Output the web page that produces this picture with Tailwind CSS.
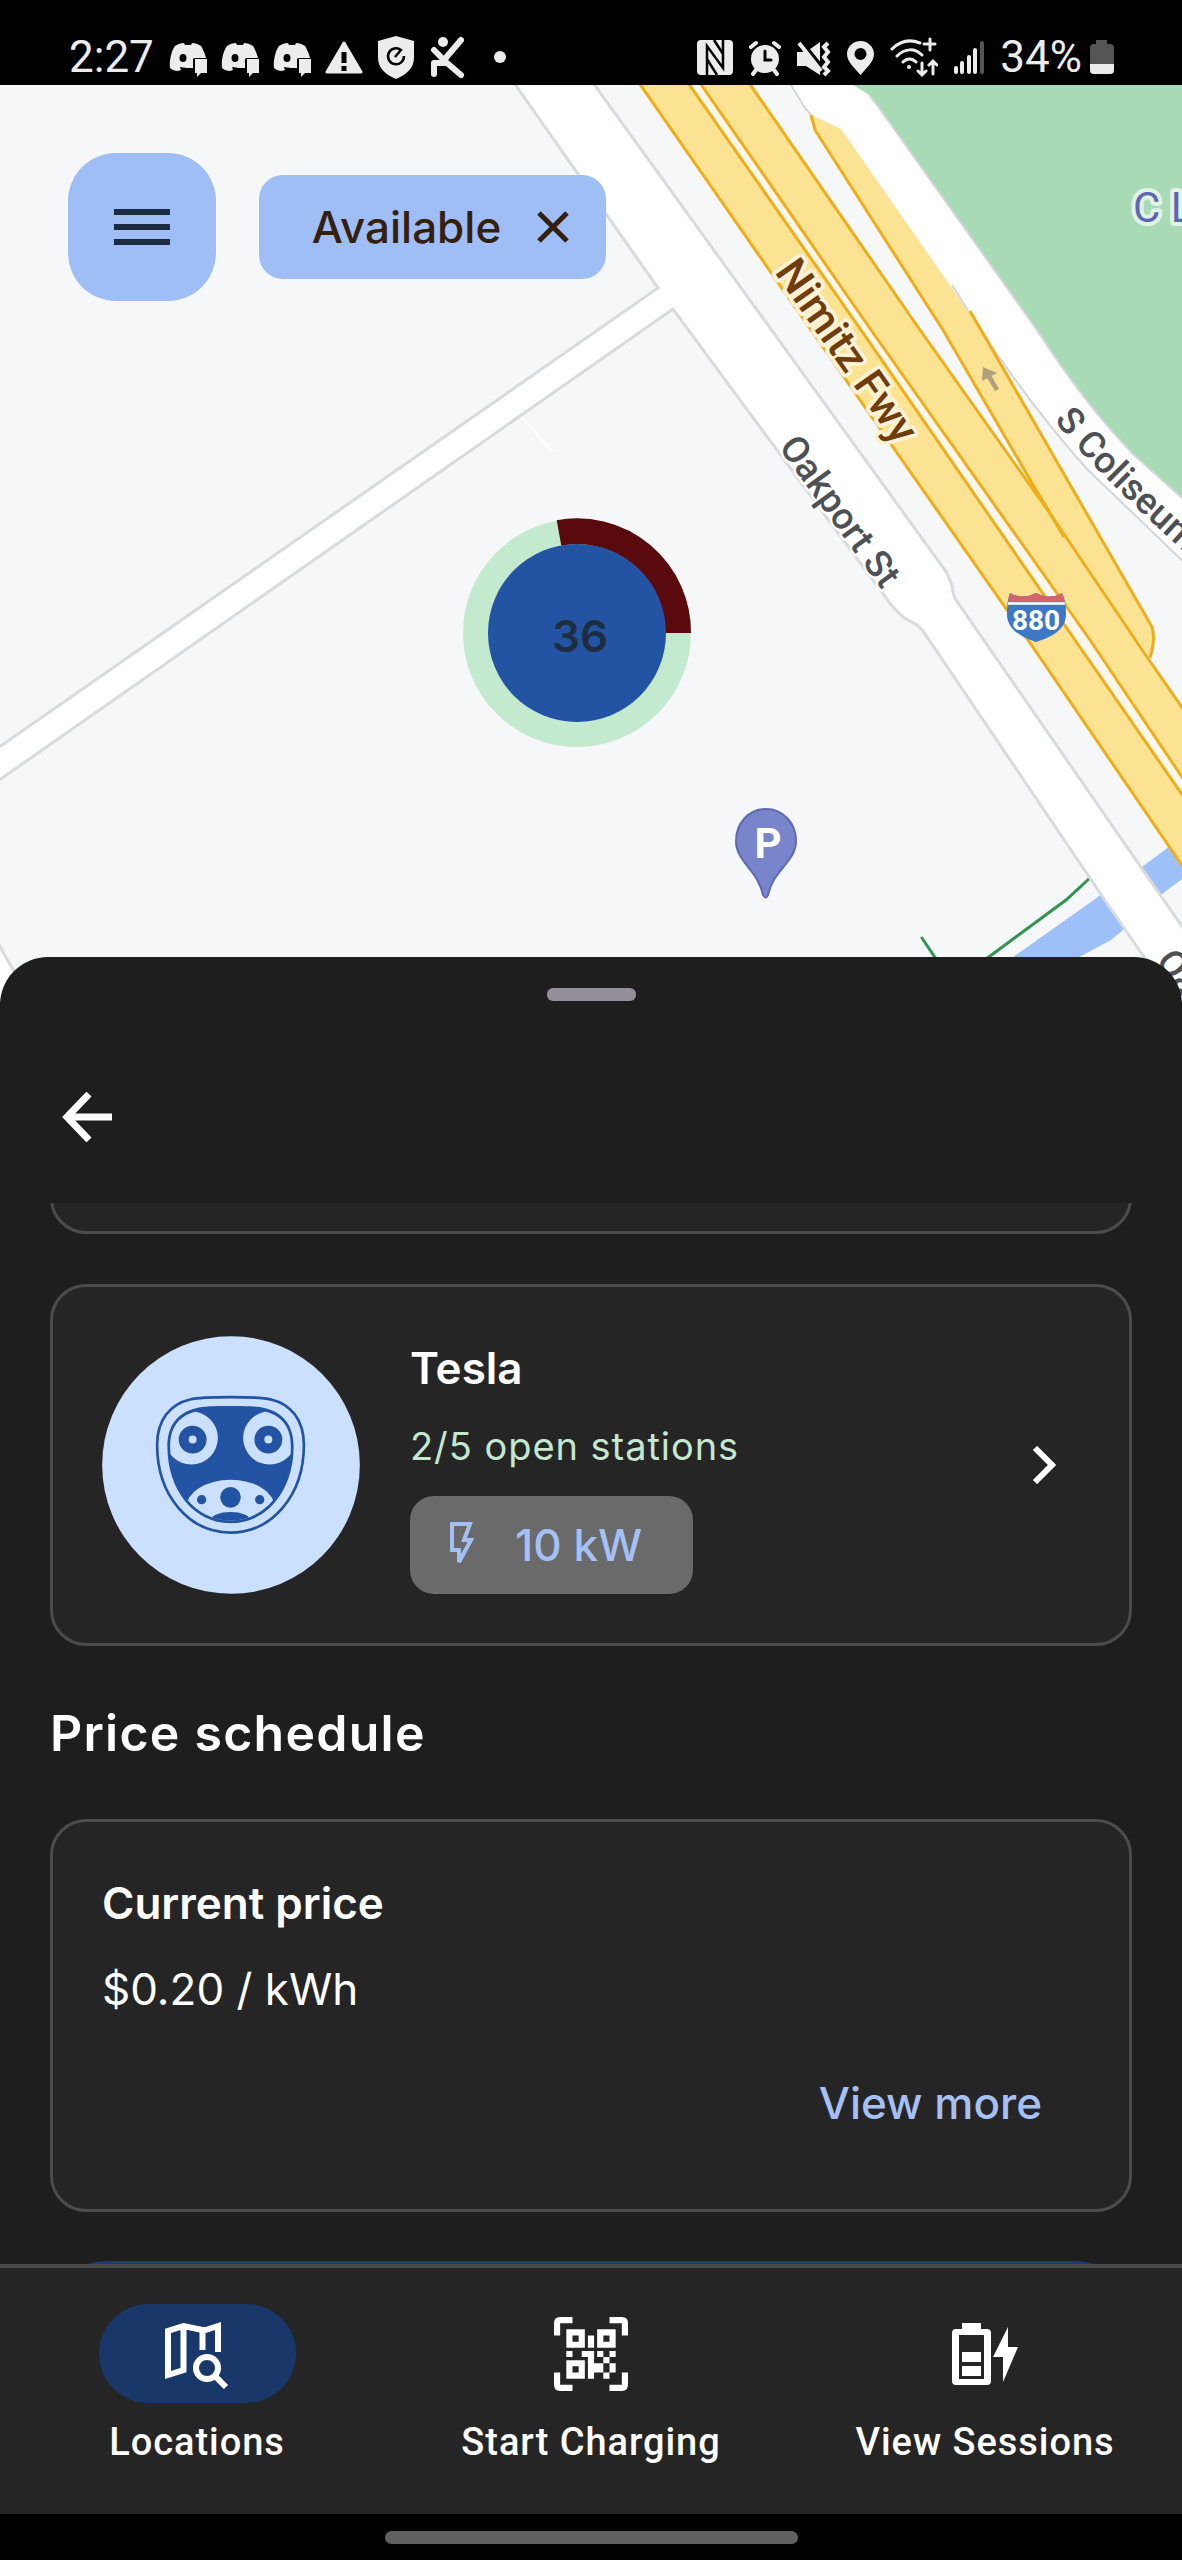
<!DOCTYPE html>
<html lang="en">
<head>
  <meta charset="UTF-8" />
  <meta name="viewport" content="width=device-width, initial-scale=1.0"/>
  <title>Charging Locations</title>
  <script src="https://cdn.jsdelivr.net/npm/@tailwindcss/browser@4"></script>
</head>
<body class="h-screen flex flex-col overflow-hidden bg-black text-white font-['Inter',sans-serif]">

<!-- Status bar -->
<header class="shrink-0 h-[85px] pt-7 pl-[69px] pr-[68px] flex items-center justify-between text-[#ececec] font-['Roboto',sans-serif] text-[44px] leading-[56px]">
  <div class="flex items-center gap-[14px]">
    <span class="w-[86px]">2:27</span>
    <svg class="w-[38px] h-11" viewBox="0 0 38 44" fill="currentColor"><path d="M1 33C0 24 3 15 6 11c3-2 6-3 9-3l1 2h6l1-2c3 0 6 1 9 3 2 3 4 8 5 12H25a4 4 0 0 0-1 4v6h-6l-7-1 1 3-3 1C6 36 3 35 1 33z"/><ellipse cx="14" cy="23" rx="3.500" ry="4" fill="#000"/><path d="M26 24h12v14H32l-4 4v-4h-2z"/></svg>
    <svg class="w-[38px] h-11" viewBox="0 0 38 44" fill="currentColor"><path d="M1 33C0 24 3 15 6 11c3-2 6-3 9-3l1 2h6l1-2c3 0 6 1 9 3 2 3 4 8 5 12H25a4 4 0 0 0-1 4v6h-6l-7-1 1 3-3 1C6 36 3 35 1 33z"/><ellipse cx="14" cy="23" rx="3.500" ry="4" fill="#000"/><path d="M26 24h12v14H32l-4 4v-4h-2z"/></svg>
    <svg class="w-[38px] h-11" viewBox="0 0 38 44" fill="currentColor"><path d="M1 33C0 24 3 15 6 11c3-2 6-3 9-3l1 2h6l1-2c3 0 6 1 9 3 2 3 4 8 5 12H25a4 4 0 0 0-1 4v6h-6l-7-1 1 3-3 1C6 36 3 35 1 33z"/><ellipse cx="14" cy="23" rx="3.500" ry="4" fill="#000"/><path d="M26 24h12v14H32l-4 4v-4h-2z"/></svg>
    <svg class="w-[38px] h-11" viewBox="0 0 38 44"><path d="M19 8L36 37H2z" fill="currentColor" stroke="currentColor" stroke-width="3" stroke-linejoin="round"/><path d="M19 17v11M19 31v5" stroke="#000" stroke-width="5"/></svg>
    <svg class="w-[38px] h-11" viewBox="0 0 38 44"><path d="M19 1l18 5v17c0 10-8 17-18 21C9 40 1 33 1 23V6z" fill="currentColor"/><path d="M27 21a8 8 0 1 1-3-6l-6 7" fill="none" stroke="#000" stroke-width="2.500"/></svg>
    <svg class="w-[38px] h-11" viewBox="0 0 38 44" fill="none" stroke="currentColor" stroke-width="6" stroke-linecap="round" stroke-linejoin="round"><circle cx="14" cy="7" r="5" fill="currentColor" stroke="none"/><path d="M5 15l10 10L32 5M5 39V28h13l14 12M20 19l-6 8"/></svg>
    <svg class="w-[38px] h-11" viewBox="0 0 38 44"><circle cx="19" cy="22" r="6" fill="currentColor"/></svg>
  </div>
  <div class="flex items-center gap-4">
    <svg class="w-9 h-11" viewBox="0 0 36 44"><rect y="5" width="36" height="35" rx="4" fill="currentColor"/><path d="M10 40V11l16 22V5M17 5l9 14M10 24l10 16" fill="none" stroke="#000" stroke-width="2.500"/></svg>
    <svg class="w-8 h-11" viewBox="0 0 32 44" fill="none" stroke="currentColor" stroke-linecap="round"><circle cx="16" cy="24" r="14" fill="currentColor" stroke="none"/><path d="M2 12l5-4M30 12l-5-4M7 35l-3 4M25 35l3 4" stroke-width="4"/><path d="M16 16v9h6" stroke="#000" stroke-width="3"/></svg>
    <svg class="w-[34px] h-11" viewBox="0 0 34 44" fill="none" stroke="currentColor"><path d="M0 17h9l14-10v33L9 31H0z" fill="currentColor" stroke="none"/><path d="M4 6l24 30" stroke="#000" stroke-width="4"/><path d="M2 8l22 28" stroke-width="4"/><path d="M31 8l-4 4 4 5-4 5 4 5-4 5 4 4-4 4" stroke-width="4"/></svg>
    <svg class="w-[27px] h-11" viewBox="0 0 27 44" fill="currentColor"><path fill-rule="evenodd" d="M13.500 6C6 6 0 12 0 19c0 8 7 13 13.500 21C20 32 27 27 27 19 27 12 21 6 13.500 6zm0 7a6 6 0 1 1 0 12 6 6 0 0 1 0-12z"/></svg>
    <svg class="w-12 h-11" viewBox="0 0 48 44" fill="none" stroke="currentColor" stroke-width="3" stroke-linecap="round"><path d="M2 14c9-9 18-10 28-6M7 21c8-8 18-8 25-1M13 27c4-4 9-4 13 0M40 4v11M34 9h11M32 28v12M28 36l4 4 4-4M43 39V26M39 30l4-4 4 4"/><circle cx="19" cy="32" r="2" fill="currentColor" stroke="none"/></svg>
    <svg class="w-[30px] h-11" viewBox="0 0 30 44" stroke="currentColor" stroke-width="4" stroke-linecap="round"><path d="M2 33v4M8 28v9M15 22v15M21 15v22"/><path d="M28 8v29" stroke="#555"/></svg>
    <span class="flex items-center gap-2">34%
      <svg class="w-6 h-11" viewBox="0 0 24 44"><path d="M6 5h11v4h3q4 0 4 4v22q0 4-4 4H4q-4 0-4-4V13q0-4 4-4h2z" fill="#555"/><path d="M0 29h24v6q0 4-4 4H4q-4 0-4-4z" fill="currentColor"/></svg>
    </span>
  </div>
</header>

<!-- Map -->
<section class="relative shrink-0 h-[917px] overflow-hidden bg-[#f5f7f9]">
  <svg class="absolute inset-0 w-full h-full font-['Roboto',sans-serif]" viewBox="0 85 1182 917" preserveAspectRatio="xMidYMin slice">
    <!-- park -->
    <path d="M845 80L869 95L877 105L1037 330Q1085 405 1134 455L1190 505V80z" fill="#a8dab5"/>
    <!-- water -->
    <path d="M1006 962L1105 892L1128 926L1111 940L1070 962zM1138 870L1170 846L1190 860V873L1158 897z" fill="#9dc0f8"/>
    <path d="M1092 876L1066 900L982 962M922 938L938 962" fill="none" stroke="#2f9550" stroke-width="3" stroke-linecap="round"/>
    <path d="M520 415L553 452" stroke="#fff" stroke-width="2"/>
    <!-- S Coliseum Way -->
    <path d="M788 80L805 108L811 115L841 129L952 285Q1020 395 1088 470L1190 568V505L1134 455Q1085 405 1037 330L877 105L869 95L845 80z" fill="#fff"/>
    <path d="M788 80L805 108L811 115M952 285Q1020 395 1088 470L1190 568M869 95L877 105L1037 330Q1085 405 1134 455L1190 505" fill="none" stroke="#d3d6d9" stroke-width="2"/>
    <!-- Oakport St and the side street -->
    <path d="M512 80L658 288L-5 750V783L673 309L892 606L903 617L917 625L923 631L1100 893L1190 1024V938L956 600L952 585L947 573L591 80z" fill="#fff"/>
    <path d="M512 80L658 288L-5 750M-5 783L673 309L892 606L903 617L917 625L923 631L1100 893L1190 1024M1190 938L956 600Q953 596 952 585L947 573L591 80" fill="none" stroke="#d8dadd" stroke-width="3"/>
    <path d="M-2 943L30 1000H-2z" fill="#fff" stroke="#d8dadd" stroke-width="3"/>
    <!-- freeway -->
    <path d="M686 80L861 330L1078 640L1190 806V789L871 330L698 80z" fill="#fdf6ea"/>
    <g fill="#fce293" stroke="#f0ad1a" stroke-width="3">
      <path d="M811 115L815 130L943 330L1039 495L1064 537L1150 658L1152 650Q1155 637 1152 627L981 330L841 129z" stroke="none"/>
      <path d="M811 115L815 130L943 330L1039 495L1064 537M970 311L981 330L1152 627Q1155 637 1152 650L1150 658" fill="none"/>
      <path d="M637 80L811 330L1028 640L1190 877V806L1075 640L861 330L686 80z"/>
      <path d="M698 80L871 330L1090 640L1190 789V719L1149 660L1049 512L920 330L747 80z"/>
      <path d="M1039 495L1064 537" fill="none"/>
    </g>
    <path d="M983 367L997 373L982 381zM986 376L990 373L999 389L995 391z" fill="#b0a07c"/>
    <!-- labels -->
    <g font-size="37" font-weight="500" fill="#4d5156" stroke="#fff" stroke-width="5" paint-order="stroke" stroke-linejoin="round">
      <text transform="translate(778 447) rotate(54)">Oakport St</text>
      <text transform="translate(1155 961) rotate(54)">Oakport St</text>
      <path id="coliseum" d="M1054 420Q1092 470 1200 566" fill="none" stroke="none"/>
      <text><textPath href="#coliseum">S Coliseum</textPath></text>
    </g>
    <text transform="translate(774 272) rotate(55)" font-size="43" font-weight="500" fill="#6f3c0c" stroke="#fdf1d3" stroke-width="8" paint-order="stroke" stroke-linejoin="round">Nimitz Fwy</text>
    <text x="1133" y="222" font-size="42" fill="#5c66b4" stroke="#e1f2e6" stroke-width="8" paint-order="stroke" stroke-linejoin="round">C L</text>
    <!-- interstate shield -->
    <path d="M1010 593Q1022 600 1036 593Q1050 600 1062 593Q1066 600 1066 614C1066 628 1055 636 1036 642C1018 636 1007 628 1007 614Q1007 600 1010 593z" fill="#3c78c6"/>
    <path d="M1010 593Q1022 600 1036 593Q1050 600 1062 593L1065 602H1008z" fill="#d5636a"/>
    <path d="M1008 603.500H1065" stroke="#fff" stroke-width="2.500"/>
    <text x="1036" y="630" text-anchor="middle" font-size="28" font-weight="700" fill="#fff">880</text>
    <!-- parking pin -->
    <path d="M766 809C749 809 736 823 736 841C736 862 758 870 763 895Q766 900 768 895C773 870 796 862 796 841C796 823 783 809 766 809z" fill="#7985cb" stroke="#5d69b6" stroke-width="2"/>
    <text x="768" y="858" text-anchor="middle" font-size="42" font-weight="700" fill="#fff">P</text>
    <!-- station cluster -->
    <circle cx="577" cy="633" r="101" fill="none" stroke="#c3eacf" stroke-width="26"/>
    <path d="M678 633A101 101 0 0 0 559 533" fill="none" stroke="#5a0a0c" stroke-width="26"/>
    <circle cx="577" cy="633" r="89" fill="#2254a3"/>
    <text x="580" y="652" text-anchor="middle" font-family="Inter, sans-serif" font-size="44" font-weight="600" fill="#1e2e40">36</text>
  </svg>

  <div class="relative flex items-start gap-[43px] pt-[68px] pl-[68px]">
    <button aria-label="Menu" class="size-[148px] rounded-[48px] bg-[#9ebef5] flex items-center justify-center">
      <svg class="w-14 h-10" viewBox="0 0 56 40" stroke="#1b2b42" stroke-width="6"><path d="M0 5h56M0 20h56M0 35h56"/></svg>
    </button>
    <button class="mt-[22px] h-[104px] w-[347px] rounded-3xl bg-[#9ebef5] text-[#35200f] text-[44px] font-medium flex items-center justify-center gap-9 pl-4">
      Available
      <svg class="size-8" viewBox="0 0 32 32" stroke="currentColor" stroke-width="5"><path d="M2 2l28 28M30 2L2 30"/></svg>
    </button>
  </div>
</section>

<!-- Bottom sheet -->
<main class="relative flex-1 min-h-0 -mt-[45px] rounded-t-[48px] bg-[#1e1e1e] flex flex-col">
  <div class="shrink-0 h-[246px] pt-[31px]">
    <div class="mx-auto w-[89px] h-[13px] rounded-md bg-[#938f99]"></div>
    <button aria-label="Back" class="block mt-[83px] ml-[54px] p-2">
      <svg class="w-[50px] h-[50px]" viewBox="0 0 50 50" fill="none" stroke="#fff" stroke-width="7"><path d="M50 25H5M27 2L5 25l22 23"/></svg>
    </button>
  </div>

  <div class="flex-1 min-h-0 overflow-hidden px-[50px]">
    <div class="-mt-[49px] h-20 rounded-[36px] border-3 border-[#4c4c4c] bg-[#252525]"></div>

    <a href="#tesla" class="mt-[50px] p-[49px] rounded-[36px] border-3 border-[#4c4c4c] bg-[#252525] flex items-center">
      <svg class="shrink-0 size-[258px]" viewBox="65 77 777 777">
        <defs><clipPath id="face"><path d="M452 296C400 296 375 297 355 302C298 315 270 350 270 410C270 536 346 633 452 633C558 633 634 536 634 410C634 350 606 315 549 302C529 297 504 296 452 296Z"/></clipPath></defs>
        <circle cx="453.500" cy="465.500" r="388" fill="#cbdffe"/>
        <path d="M452 261C400 261 360 261 330 268C270 282 231 330 231 405C231 560 330 669 452 669C574 669 673 560 673 405C673 330 634 282 574 268C544 261 504 261 452 261Z" fill="none" stroke="#2254a3" stroke-width="8"/>
        <path d="M452 288C400 288 370 289 350 294C290 308 262 350 262 410C262 540 340 641 452 641C564 641 642 540 642 410C642 350 614 308 554 294C534 289 504 288 452 288Z" fill="#2254a3"/>
        <g clip-path="url(#face)">
          <circle cx="334" cy="384" r="80" fill="#cbdffe"/>
          <circle cx="570" cy="384" r="80" fill="#cbdffe"/>
          <ellipse cx="452" cy="595" rx="134" ry="85" fill="#cbdffe"/>
          <ellipse cx="452" cy="632" rx="60" ry="25" fill="#2254a3"/>
        </g>
        <g fill="#2254a3">
          <circle cx="338" cy="389" r="42"/><circle cx="566" cy="389" r="42"/>
          <circle cx="452" cy="563" r="31"/><circle cx="365" cy="570" r="14"/><circle cx="540" cy="570" r="14"/>
        </g>
        <circle cx="338" cy="389" r="12" fill="#cbdffe"/><circle cx="566" cy="389" r="12" fill="#cbdffe"/>
      </svg>
      <div class="ml-[50px] flex-1 flex flex-col items-start">
        <h2 class="text-[44px] leading-[64px] font-semibold">Tesla</h2>
        <p class="mt-4 text-[38px] leading-[60px] text-[#c3e8cf] tracking-wide">2/5 open stations</p>
        <span class="mt-5 h-[98px] w-[283px] rounded-3xl bg-[#6a6a6a] text-[#a4c0f4] text-[44px] font-medium flex items-center pl-10 gap-[41px]">
          <svg class="w-6 h-[46px]" viewBox="0 0 24 46" fill="none" stroke="currentColor" stroke-width="4"><path d="M2 2h18l-6 16h7L9 40V28H2z"/></svg>
          10 kW
        </span>
      </div>
      <svg class="mr-6 w-6 h-[38px]" viewBox="0 0 24 38" fill="none" stroke="#fff" stroke-width="6"><path d="M3 2l17 17L3 36"/></svg>
    </a>

    <h1 class="mt-[57px] mb-14 text-[50px] leading-[60px] font-semibold tracking-wide">Price schedule</h1>

    <div class="px-[49px] pt-[49px] pb-[57px] rounded-[36px] border-3 border-[#4c4c4c] bg-[#252525] text-[44px] leading-[64px]">
      <h2 class="font-semibold">Current price</h2>
      <p class="mt-[22px]">$0.20 / kWh</p>
      <div class="mt-8 flex justify-end">
        <button class="h-[99px] px-[38px] text-[#a4c0f4] font-medium">View more</button>
      </div>
    </div>

    <button aria-label="Start" class="block w-full mt-[49px] h-28 rounded-full bg-[#1d3c70]"></button>
  </div>
</main>

<!-- Bottom navigation -->
<nav class="shrink-0 pt-9 pb-12 border-t-4 border-[#4a4a4a] bg-[#252525] grid grid-cols-3 font-['Roboto',sans-serif] text-[38px] leading-[48px] font-medium tracking-wide">
  <a href="#locations" class="flex flex-col items-center gap-[15px]">
    <span class="w-[197px] h-[99px] rounded-full bg-[#193869] flex items-center justify-center">
      <svg class="w-[66px] h-[70px]" viewBox="165 2319 66 70" fill="none" stroke="#fff" stroke-width="6"><path d="M203.500 2350V2330L184.500 2326L169 2331V2375L184.500 2370V2326M203.500 2331L219 2326V2352"/><circle cx="208" cy="2368" r="11"/><path d="M216 2376L227 2387"/></svg>
    </span>
    Locations
  </a>
  <a href="#charge" class="flex flex-col items-center gap-[15px]">
    <span class="h-[99px] flex items-center">
      <svg class="size-[74px]" viewBox="0 0 12 12" fill="#fff">
        <path d="M.5 3V1Q.5.5 1 .5H3M9 .5h2q.5 0 .5.5v2M11.500 9v2q0 .5-.5.5H9M3 11.500H1Q.5 11.500.5 11V9" fill="none" stroke="#fff"/>
        <path d="M2.500 2.500h2v2h-2zM7.500 2.500h2v2h-2zM2.500 7.500h2v2h-2z" fill="none" stroke="#fff"/>
        <path d="M5.500 3h1v2h-1zM2 5.500h1v1H2zM4.500 5.500h2v2h-1v-1h-1zM5.500 7.500H7V8h1v1H6.500v1h-1zM7 5.500h1v1H7zM9 5.500h1v1H9zM8 6.500h1v1H8zM7 7.500h1V8H7zM9 7.500h1V9H9zM8 9h1v1H8z"/>
      </svg>
    </span>
    Start Charging
  </a>
  <a href="#sessions" class="flex flex-col items-center gap-[15px]">
    <span class="h-[99px] flex items-center">
      <svg class="w-[66px] h-[64px]" viewBox="953 2322 66 64" fill="#fff"><path fill-rule="evenodd" d="M963 2323H982V2329H988Q992 2329 992 2333V2381Q992 2385 988 2385H957Q953 2385 953 2381V2333Q953 2329 957 2329H963zM960 2335V2379H985V2335z"/><path d="M963 2352H982V2362H963zM963 2366H982V2376H963zM1009 2327V2347H1019L1004 2382V2357H994z"/></svg>
    </span>
    View Sessions
  </a>
</nav>

<!-- Gesture bar -->
<footer class="shrink-0 h-[46px] pt-[17px] bg-black">
  <div class="mx-auto w-[413px] h-[13px] rounded-full bg-[#616161]"></div>
</footer>

</body>
</html>
